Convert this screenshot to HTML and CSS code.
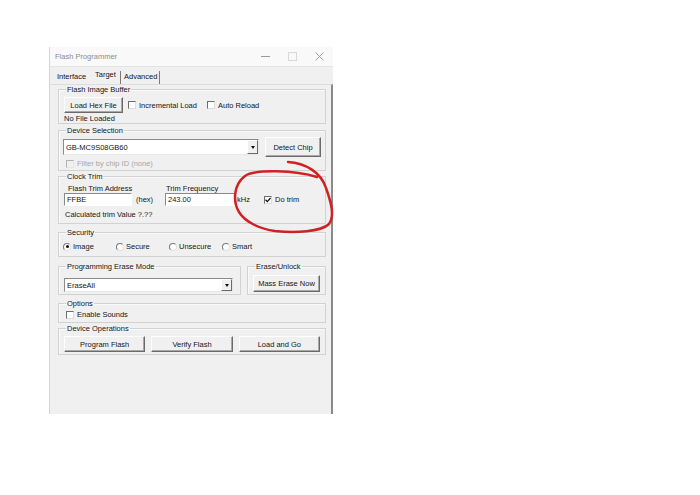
FILE: index.html
```html
<!DOCTYPE html>
<html lang="en">

<head>
  <meta charset="UTF-8">
  <meta name="viewport" content="width=device-width, initial-scale=1.0">
  <title>Flash Programmer</title>
  <link rel="stylesheet" href="styles.css">
</head>

<body>
  <div class="window">
    <div class="titlebar">
      <span class="title">Flash Programmer</span>
      <div class="controls">
        <span class="ctl"><svg width="9" height="9" viewBox="0 0 9 9"><path d="M0 4.5H9" stroke="#9a9a9a" stroke-width="1"/></svg></span>
        <span class="ctl"><svg width="9" height="9" viewBox="0 0 9 9"><rect x="0.5" y="0.5" width="8" height="8" fill="none" stroke="#d8d8d8"/></svg></span>
        <span class="ctl"><svg width="9" height="9" viewBox="0 0 9 9"><path d="M0.5 0.5L8.5 8.5M8.5 0.5L0.5 8.5" stroke="#a0a0a0" stroke-width="1"/></svg></span>
      </div>
    </div>

    <div class="tabs">
      <span class="tab tab-interface">Interface</span>
      <span class="tab tab-target active">Target</span>
      <span class="tab tab-advanced">Advanced</span>
    </div>

    <div class="panel">
      <fieldset class="group g-image">
        <legend>Flash Image Buffer</legend>
        <div class="row">
          <button class="btn btn-load">Load Hex File</button>
          <label class="check ml5"><span class="box"></span>Incremental Load</label>
          <label class="check ml10"><span class="box"></span>Auto Reload</label>
        </div>
        <div class="line">No File Loaded</div>
      </fieldset>

      <fieldset class="group g-device">
        <legend>Device Selection</legend>
        <div class="row row-device">
          <div class="select sel-device"><span>GB-MC9S08GB60</span><span class="drop"></span></div>
          <button class="btn btn-detect">Detect Chip</button>
        </div>
        <label class="check disabled line ml2"><span class="box"></span>Filter by chip ID (none)</label>
      </fieldset>

      <fieldset class="group g-clock">
        <legend>Clock Trim</legend>
        <div class="trim-grid">
          <span class="lbl lbl-addr">Flash Trim Address</span>
          <span></span>
          <span class="lbl lbl-freq">Trim Frequency</span>
          <span></span>
          <span></span>
          <div class="input">FFBE</div>
          <span class="unit unit-hex">(hex)</span>
          <div class="input">243.00</div>
          <span class="unit unit-khz">kHz</span>
          <label class="check ml2"><span class="box checked"><svg width="6" height="6" viewBox="0 0 6 6"><path d="M0.5 2.8L2.3 4.6L5.5 1" fill="none" stroke="#111" stroke-width="1.3"/></svg></span>Do trim</label>
        </div>
        <div class="line calc">Calculated trim Value ?.??</div>
      </fieldset>

      <fieldset class="group g-security">
        <legend>Security</legend>
        <div class="radios">
          <label class="radio"><span class="dot on"></span>Image</label>
          <label class="radio"><span class="dot"></span>Secure</label>
          <label class="radio"><span class="dot"></span>Unsecure</label>
          <label class="radio"><span class="dot"></span>Smart</label>
        </div>
      </fieldset>

      <div class="erase-row">
        <fieldset class="group g-erase">
          <legend>Programming Erase Mode</legend>
          <div class="select sel-erase"><span>EraseAll</span><span class="drop"></span></div>
        </fieldset>
        <fieldset class="group g-unlock">
          <legend>Erase/Unlock</legend>
          <button class="btn btn-mass">Mass Erase Now</button>
        </fieldset>
      </div>

      <fieldset class="group g-options">
        <legend>Options</legend>
        <label class="check line ml2"><span class="box"></span>Enable Sounds</label>
      </fieldset>

      <fieldset class="group g-ops">
        <legend>Device Operations</legend>
        <div class="ops">
          <button class="btn">Program Flash</button>
          <button class="btn">Verify Flash</button>
          <button class="btn">Load and Go</button>
        </div>
      </fieldset>
    </div>
  </div>

  <!-- hand drawn mark -->
  <svg class="scribble" width="115" height="80" viewBox="0 0 115 80">
    <path d="M63 2 C80 3, 96 12, 101 28 C106 42, 110 56, 104 64 C96 72, 70 73, 50 71 C35 69, 20 62, 14 52 C8 42, 8 25, 20 16 C30 9, 70 10, 92 17"
      fill="none" stroke="#cf2222" stroke-width="2.5" stroke-linecap="round"/>
  </svg>
</body>

</html>
```

FILE: styles.css
```css
body {
  margin: 0;
  background-color: #fff;
  font-family: "Liberation Sans", Arial, sans-serif;
  font-size: 7.5px;
  color: #151515;
}

.window {
  margin: 47px 0 0 49px;
  width: 284px;
  height: 367px;
  box-sizing: border-box;
  background-color: #f0f0f0;
  border-left: 1px solid #d4d4d4;
  display: flex;
  flex-direction: column;
}

.titlebar {
  height: 20px;
  box-sizing: border-box;
  background-color: #f9f9f9;
  border-bottom: 1px solid #e4e4e4;
  display: flex;
  align-items: center;
  padding-left: 5px;
  color: #8c8c8c;
}

.controls {
  margin-left: auto;
  display: flex;
}

.ctl {
  width: 27px;
  display: flex;
  justify-content: center;
}

.tabs {
  height: 17px;
  box-sizing: border-box;
  display: flex;
  align-items: flex-end;
  padding-left: 7px;
}

.tab {
  height: 13px;
  line-height: 12px;
  box-sizing: border-box;
}

.tab-interface {
  width: 38px;
}

.tab-target {
  width: 25px;
}

.tab.active {
  line-height: 7px;
}

.tab-advanced {
  width: 40px;
  padding-left: 3px;
  border-left: 1px solid #7a7a7a;
  border-right: 1px solid #7a7a7a;
}

.panel {
  flex: 1;
  border-top: 1px solid #dcdcdc;
  border-right: 2px solid #8a8a8a;
  padding: 0 5px 0 8px;
}

/* group boxes */
.group {
  margin: 0;
  padding: 0 5px;
  border: 1px solid #d2d2d2;
  box-shadow: inset 1px 1px #fafafa;
  min-inline-size: auto;
}

.group legend {
  padding: 0 1px;
  margin-left: 2px;
  line-height: 9px;
}

.line {
  height: 9px;
  line-height: 9px;
  white-space: nowrap;
}

.row {
  display: flex;
  align-items: center;
}

.ml2 {
  margin-left: 2px;
}

.ml5 {
  margin-left: 5px;
}

.ml10 {
  margin-left: 10px;
}

.g-image {
  padding-top: 3px;
  padding-bottom: 0;
}

.g-image .line {
  margin-top: 1px;
}

.g-device {
  margin-top: 2px;
  padding-top: 2px;
  padding-bottom: 2px;
  padding-right: 4px;
}

.row-device {
  height: 20px;
  justify-content: space-between;
  margin-left: -1px;
}

.g-device .line {
  margin-top: 2px;
}

.g-clock {
  margin-top: 1px;
  padding-top: 2px;
  padding-bottom: 4px;
}

.g-security {
  margin-top: 4px;
  padding-top: 5px;
  padding-bottom: 5px;
}

.erase-row {
  margin-top: 5px;
  display: flex;
  gap: 6px;
}

.g-erase {
  width: 183px;
  box-sizing: border-box;
  padding-top: 7px;
  padding-bottom: 2px;
}

.g-unlock {
  flex: 1;
  padding-top: 4px;
}

.g-options {
  margin-top: 4px;
  padding-top: 2px;
  padding-bottom: 3px;
}

.g-ops {
  margin-top: 1px;
  padding-top: 3px;
  padding-bottom: 2px;
}

/* controls */
.btn {
  font: inherit;
  color: #151515;
  background-color: #f0f0f0;
  border: 1px solid;
  border-color: #fff #6a6a6a #6a6a6a #fff;
  box-shadow: inset -1px -1px #a8a8a8;
  padding: 0;
  height: 16px;
}

.btn-load {
  width: 59px;
}

.btn-detect {
  width: 56px;
  height: 20px;
}

.btn-mass {
  width: 67px;
  height: 17px;
}

.ops {
  display: flex;
  gap: 6px;
}

.ops .btn {
  flex: 1;
}

.check,
.radio {
  display: flex;
  align-items: center;
  white-space: nowrap;
}

.box {
  width: 8px;
  height: 8px;
  box-sizing: border-box;
  margin-right: 3px;
  background-color: #fff;
  border: 1px solid;
  border-color: #6e6e6e #dcdcdc #dcdcdc #6e6e6e;
  display: flex;
  align-items: center;
  justify-content: center;
}

.check.disabled {
  color: #a6a6a6;
}

.check.disabled .box {
  background-color: #f0f0f0;
  border-color: #b0b0b0 #e6e6e6 #e6e6e6 #b0b0b0;
}

.select {
  height: 16px;
  box-sizing: border-box;
  background-color: #fff;
  border: 1px solid;
  border-color: #8a8a8a #e8e8e8 #e8e8e8 #8a8a8a;
  display: flex;
  align-items: center;
  justify-content: space-between;
  padding-left: 2px;
}

.sel-device {
  width: 196px;
}

.sel-erase {
  width: 169px;
  height: 14px;
}

.drop {
  width: 11px;
  height: 100%;
  box-sizing: border-box;
  background-color: #f0f0f0;
  border: 1px solid;
  border-color: #fff #6a6a6a #6a6a6a #fff;
  display: flex;
  align-items: center;
  justify-content: center;
}

.drop::after {
  content: "";
  border-left: 2.5px solid transparent;
  border-right: 2.5px solid transparent;
  border-top: 3px solid #111;
}

.trim-grid {
  display: grid;
  grid-template-columns: 68px 33px 70px 27px auto;
  grid-template-rows: 10px 13px;
  row-gap: 0;
  align-items: center;
}

.lbl {
  white-space: nowrap;
  line-height: 9px;
}

.lbl-addr {
  padding-left: 4px;
}

.lbl-freq {
  padding-left: 1px;
}

.input {
  height: 13px;
  box-sizing: border-box;
  background-color: #fff;
  border: 1px solid;
  border-color: #8a8a8a #fff #fff #8a8a8a;
  line-height: 11px;
  padding-left: 2px;
}

.unit-hex {
  padding-left: 4px;
}

.unit-khz {
  padding-left: 2px;
}

.calc {
  margin-top: 4px;
  padding-left: 1px;
}

.radios {
  display: flex;
  height: 9px;
  margin-left: -1px;
}

.radio {
  width: 53px;
}

.dot {
  width: 8px;
  height: 8px;
  box-sizing: border-box;
  margin-right: 2px;
  border-radius: 50%;
  background-color: #fff;
  border: 1px solid;
  border-color: #7a7a7a #e0e0e0 #e0e0e0 #7a7a7a;
  display: flex;
  align-items: center;
  justify-content: center;
}

.dot.on::after {
  content: "";
  width: 3px;
  height: 3px;
  border-radius: 50%;
  background-color: #111;
}

.scribble {
  position: absolute;
  left: 225px;
  top: 160px;
}
```
